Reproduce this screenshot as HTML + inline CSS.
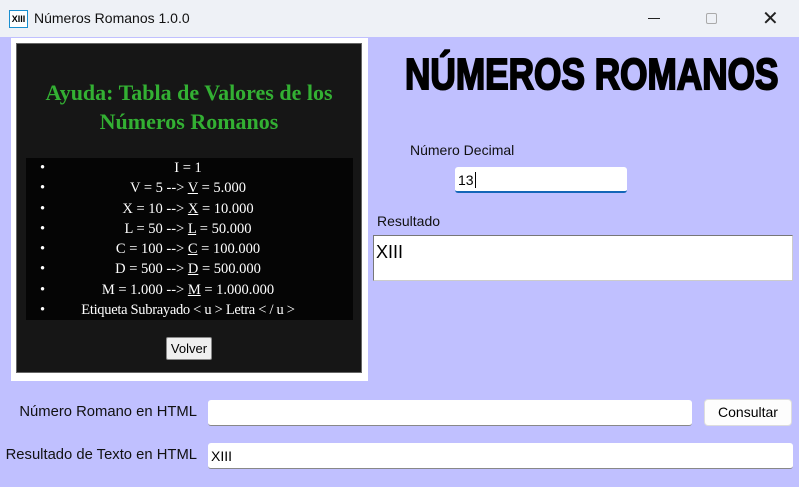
<!DOCTYPE html>
<html><head><meta charset="utf-8"><style>
*{margin:0;padding:0;box-sizing:border-box}
body{width:799px;height:487px;background:#c0c0ff;font-family:"Liberation Sans",sans-serif;position:relative;overflow:hidden}
.a{position:absolute}
.tb{left:0;top:0;width:799px;height:37px;background:#eef1f6}
.lbl{font-size:14px;color:#111}
.inp{background:#fff;border-bottom:1px solid #888;border-radius:3px;font-size:14px;padding-left:3px}
.serif{font-family:"Liberation Serif",serif}
li{list-style:none;height:20.3px;line-height:20.3px;position:relative}
li:before{content:"•";position:absolute;left:-26px;color:#fff}
</style></head><body>
<div class="a tb"></div>
<div class="a" style="left:9px;top:10px;width:19px;height:18px;border:1px solid #1a8fd0;background:#fff;font-size:9px;font-weight:bold;line-height:16px;text-align:center">XIII</div>
<div class="a" style="left:34px;top:10px;font-size:14px;color:#111">Números Romanos 1.0.0</div>
<div class="a" style="left:648px;top:18px;width:12px;height:1px;background:#222"></div>
<div class="a" style="left:706px;top:13px;width:11px;height:11px;border:1px solid #aaa;border-radius:2px"></div>
<div class="a" style="left:762px;top:6px;font-size:20px;color:#222">✕</div>

<div class="a" style="left:11px;top:38px;width:357px;height:343px;background:#fff"></div>
<div class="a" style="left:16px;top:43px;width:346px;height:330px;background:#161616;border:1px solid #666"></div>
<div class="a serif" style="left:16px;top:78px;width:346px;text-align:center;color:#33b033;font-weight:bold;font-size:22px;line-height:29px">Ayuda: Tabla de Valores de los<br>Números Romanos</div>
<div class="a serif" style="left:26px;top:158px;width:327px;height:162px;background:#050505;color:#fff;font-size:14.5px;text-align:center">
<ul style="padding-left:40px;padding-right:43px;padding-top:0">
<li>I = 1</li>
<li>V = 5 --&gt; <u>V</u> = 5.000</li>
<li>X = 10 --&gt; <u>X</u> = 10.000</li>
<li>L = 50 --&gt; <u>L</u> = 50.000</li>
<li>C = 100 --&gt; <u>C</u> = 100.000</li>
<li>D = 500 --&gt; <u>D</u> = 500.000</li>
<li>M = 1.000 --&gt; <u>M</u> = 1.000.000</li>
<li style="letter-spacing:-0.3px">Etiqueta Subrayado &lt; u &gt; Letra &lt; / u &gt;</li>
</ul></div>
<div class="a" style="left:166px;top:337px;width:46px;height:23px;background:#efefef;border:1px solid #888;border-radius:2px;font-size:13px;text-align:center;line-height:21px">Volver</div>

<div class="a" style="left:405px;top:50px;font-size:44px;font-weight:900;color:#000;-webkit-text-stroke:2px #000;transform:scaleX(0.8);transform-origin:left top;white-space:nowrap">NÚMEROS ROMANOS</div>

<div class="a lbl" style="left:410px;top:142px">Número Decimal</div>
<div class="a inp" style="left:455px;top:167px;width:172px;height:26px;border-bottom:2px solid #1466b8;line-height:26px">13<span style="border-left:1px solid #000;margin-left:1px"></span></div>
<div class="a lbl" style="left:377px;top:213px">Resultado</div>
<div class="a" style="left:373px;top:235px;width:420px;height:46px;background:#fff;border:1px solid #777;border-right-color:#ccc;border-bottom-color:#ccc;font-size:18px;padding:6px 0 0 2px">XIII</div>

<div class="a lbl" style="left:0;top:404px;width:197px;text-align:right;font-size:14.8px">Número Romano en HTML</div>
<div class="a inp" style="left:208px;top:400px;width:484px;height:26px"></div>
<div class="a" style="left:704px;top:399px;width:88px;height:27px;background:#fdfdfd;border:1px solid #ddd;border-radius:4px;font-size:14px;text-align:center;line-height:25px">Consultar</div>
<div class="a lbl" style="left:0;top:447px;width:197px;text-align:right;font-size:14.8px">Resultado de Texto en HTML</div>
<div class="a inp" style="left:208px;top:443px;width:585px;height:26px;line-height:26px">XIII</div>
</body></html>
